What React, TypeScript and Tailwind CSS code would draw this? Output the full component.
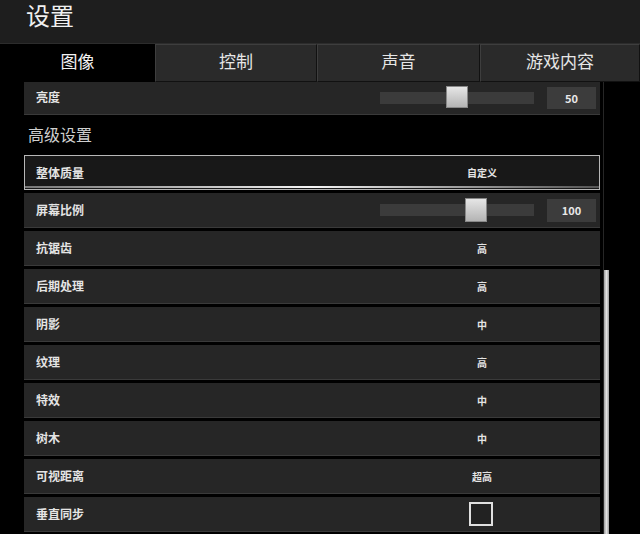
import React from 'react';

type Row =
  | { label: string; kind: 'text'; value: string }
  | { label: string; kind: 'slider'; value: number; pos: number }
  | { label: string; kind: 'check' };

const rows: Row[] = [
  { label: '屏幕比例', kind: 'slider', value: 100, pos: 85 },
  { label: '抗锯齿', kind: 'text', value: '高' },
  { label: '后期处理', kind: 'text', value: '高' },
  { label: '阴影', kind: 'text', value: '中' },
  { label: '纹理', kind: 'text', value: '高' },
  { label: '特效', kind: 'text', value: '中' },
  { label: '树木', kind: 'text', value: '中' },
  { label: '可视距离', kind: 'text', value: '超高' },
  { label: '垂直同步', kind: 'check' },
];

const tabs = [
  { name: '图像', w: 'w-[155px]' },
  { name: '控制', w: 'w-[162px]' },
  { name: '声音', w: 'w-[163px]' },
  { name: '游戏内容', w: 'w-[160px]' },
];

function Slider({ value, pos }: { value: number; pos: number }) {
  return (
    <div className="flex items-center gap-[13px] ml-auto mr-[4px]">
      <div className="relative w-[154px] h-[12px] bg-[#3b3b3b]">
        <div
          className="absolute top-[-6px] w-[22px] h-[24px] bg-gradient-to-b from-[#e6e6e6] to-[#b4b4b4] border border-[#888]"
          style={{ left: pos }}
        />
      </div>
      <div className="w-[49px] h-[23px] bg-[#3c3c3c] flex items-center justify-center text-[11px] font-bold text-[#e8e8e8]">
        {value}
      </div>
    </div>
  );
}

function SettingRow({ row }: { row: Row }) {
  return (
    <div className="relative flex items-center h-[35px] bg-[#262626] border-b border-[#3a3a3a] pl-[12px]">
      <span className="text-[12px] font-bold text-[#e4e4e4] w-[200px]">{row.label}</span>
      {row.kind === 'text' && (
        <span className="absolute left-[458px] w-[0px] flex justify-center text-[10px] font-bold text-[#e4e4e4] whitespace-nowrap">
          {row.value}
        </span>
      )}
      {row.kind === 'slider' && <Slider value={row.value} pos={row.pos} />}
      {row.kind === 'check' && (
        <div className="absolute left-[445px] w-[24px] h-[24px] border-2 border-[#e0e0e0] bg-[#222]" />
      )}
    </div>
  );
}

export default function App() {
  return (
    <div
      className="w-[640px] h-[534px] overflow-hidden bg-black flex flex-col"
      style={{ fontFamily: '"Noto Sans CJK SC", "Noto Sans", sans-serif' }}
    >
      <div className="h-[44px] shrink-0 bg-[#1e1e1e] border-b border-[#2c2c2c] flex items-start pl-[26px]">
        <span className="text-[24px] text-[#f0f0f0] leading-[30px]">设置</span>
      </div>

      <div className="h-[38px] shrink-0 flex bg-black">
        {tabs.map((t, i) => (
          <div
            key={t.name}
            className={`${t.w} flex items-center justify-center pb-[5px] text-[17px] ${
              i === 0
                ? 'bg-black text-[#f2f2f2]'
                : 'bg-[#2a2a2a] text-[#e6e6e6] border-t border-l border-[#3e3e3e] border-r border-r-[#111] border-b border-b-[#111]'
            }`}
          >
            {t.name}
          </div>
        ))}
      </div>

      <div className="flex flex-1 min-h-0">
        <div className="w-[24px] shrink-0" />
        <div className="w-[576px] shrink-0 flex flex-col">
          <div className="flex items-center h-[33px] bg-[#262626] border-b border-[#3a3a3a] pl-[12px]">
            <span className="text-[12px] font-bold text-[#e4e4e4] -mt-[2px]">亮度</span>
            <div className="flex items-center gap-[13px] ml-auto mr-[4px]">
              <div className="relative w-[154px] h-[12px] bg-[#3b3b3b]">
                <div className="absolute top-[-6px] left-[66px] w-[22px] h-[22px] bg-gradient-to-b from-[#e6e6e6] to-[#b4b4b4] border border-[#888]" />
              </div>
              <div className="w-[49px] h-[22px] bg-[#3c3c3c] flex items-center justify-center text-[11px] font-bold text-[#e8e8e8]">
                50
              </div>
            </div>
          </div>

          <div className="h-[40px] flex items-center pl-[4px] pb-[2px] text-[16px] text-[#cfcfcf]">高级设置</div>

          <div className="relative flex items-center h-[35px] bg-[#181818] border border-[#b8b8b8] pl-[11px] mb-[3px]">
            <span className="text-[12px] font-bold text-[#e4e4e4]">整体质量</span>
            <span className="absolute left-[457px] w-[0px] flex justify-center text-[10px] font-bold text-[#e4e4e4] whitespace-nowrap">
              自定义
            </span>
            <div className="absolute left-0 right-0 bottom-[1px] h-[2px] bg-gradient-to-r from-[#777] via-[#f5f5f5] to-[#555]" />
          </div>

          <div className="flex flex-col gap-[3px]">
            {rows.map((r) => (
              <SettingRow key={r.label} row={r} />
            ))}
          </div>
        </div>
        <div className="w-[40px] shrink-0 flex pl-[3px]">
          <div className="relative w-[6px] h-full border-l border-[#262626]">
            <div className="absolute left-0 w-[5px] top-[188px] bottom-0 bg-gradient-to-r from-[#9a9a9a] via-[#e0e0e0] to-[#9a9a9a]" />
          </div>
        </div>
      </div>
    </div>
  );
}
